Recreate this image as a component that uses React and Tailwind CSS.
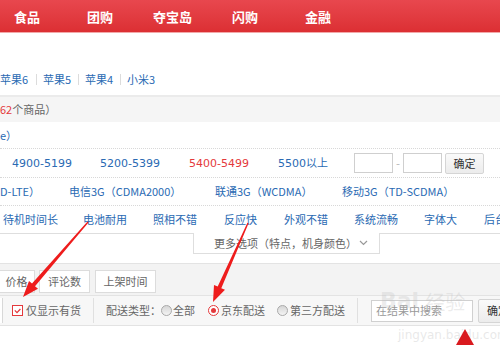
import React from "react";

var navItems = [
  { label: "食品", w: "w-[73px]" },
  { label: "团购", w: "w-[66px]" },
  { label: "夺宝岛", w: "w-[79px]" },
  { label: "闪购", w: "w-[73px]" },
  { label: "金融", w: "" },
];

var features = [
  { label: "待机时间长", w: "w-[80px]" },
  { label: "电池耐用", w: "w-[70px]" },
  { label: "照相不错", w: "w-[71px]" },
  { label: "反应快", w: "w-[60px]" },
  { label: "外观不错", w: "w-[70px]" },
  { label: "系统流畅", w: "w-[70px]" },
  { label: "字体大", w: "w-[60px]" },
  { label: "后台多开", w: "w-[70px]" },
];

var Radio = function (_a) {
  var checked = _a.checked, className = _a.className || "";
  if (checked) {
    return (<span className={"w-[11px] h-[11px] rounded-full border border-[#e4393c] bg-white flex items-center justify-center shrink-0 " + className}>
        <span className="w-[5px] h-[5px] rounded-full bg-[#e4393c]"></span>
      </span>);
  }
  return (<span className={"block w-[11px] h-[11px] rounded-full border border-[#a9a9a9] bg-linear-to-b from-[#d6d6d6] to-[#f4f4f4] shrink-0 " + className}></span>);
};

var App = function () {
  return (<div className="relative w-[500px] h-[345px] overflow-hidden bg-white font-['Noto_Sans_CJK_SC',sans-serif] text-[11px] leading-none">
      {/* top nav */}
      <div className="h-[33px] bg-linear-to-b from-[#e8474e] to-[#dc2f33] border-b border-[#f2a9a9] flex items-center text-[13px] font-bold text-white">
        <div className="w-[14px]"></div>
        {navItems.map(function (n) {
      return <span key={n.label} className={n.w}>{n.label}</span>;
    })}
      </div>

      {/* brands */}
      <div className="h-[62px] flex items-end pb-[10px] text-[#2a6ab3]">
        <span className="w-[36px]">苹果6</span>
        <span className="w-px h-[11px] bg-[#dcdcdc] mr-[6px]"></span>
        <span className="w-[35px]">苹果5</span>
        <span className="w-px h-[11px] bg-[#dcdcdc] mr-[6px]"></span>
        <span className="w-[35px]">苹果4</span>
        <span className="w-px h-[11px] bg-[#dcdcdc] mr-[6px]"></span>
        <span>小米3</span>
      </div>

      {/* result count */}
      <div className="h-[27px] border-t-2 border-[#ebebeb] bg-[#f5f5f5] flex items-center text-[#666]">
        <span className="text-[#e4393c]">62</span>
        <span>个商品）</span>
      </div>

      <div className="h-[27px] flex items-center border-b border-dotted border-[#d8d8d8] text-[#2a6ab3]">
        <span>e）</span>
      </div>

      {/* price row */}
      <div className="h-[29px] flex items-center border-b border-dotted border-[#d8d8d8] font-['DejaVu_Sans','Noto_Sans_CJK_SC',sans-serif] text-[#2a6ab3]">
        <div className="w-[12px]"></div>
        <span className="w-[88px]">4900-5199</span>
        <span className="w-[89px]">5200-5399</span>
        <span className="w-[89px] text-[#e4393c]">5400-5499</span>
        <span className="w-[76px]">5500以上</span>
        <span className="w-[39px] h-[20px] border border-[#cfcfcf] bg-white"></span>
        <span className="w-[10px] text-center text-[#bbb]">-</span>
        <span className="w-[39px] h-[20px] border border-[#cfcfcf] bg-white"></span>
        <span className="ml-[3px] w-[39px] h-[21px] border border-[#d5d5d5] rounded-[2px] bg-linear-to-b from-[#fafafa] to-[#ececec] flex items-center justify-center font-['Noto_Sans_CJK_SC',sans-serif] text-[#333]">确定</span>
      </div>

      {/* network row */}
      <div className="h-[28px] flex items-center border-b border-dotted border-[#d8d8d8] text-[#2a6ab3] whitespace-nowrap">
        <span className="w-[69px]">D-LTE）</span>
        <span className="w-[146px]">电信3G（CDMA2000）</span>
        <span className="w-[127px]">联通3G（WCDMA）</span>
        <span>移动3G（TD-SCDMA）</span>
      </div>

      {/* feature row */}
      <div className="h-[27px] flex items-center text-[#2a6ab3] whitespace-nowrap">
        <div className="w-[3px] shrink-0"></div>
        {features.map(function (f) {
      return <span key={f.label} className={f.w + " shrink-0"}>{f.label}</span>;
    })}
      </div>

      {/* more options tab */}
      <div className="h-[30px] flex items-start">
        <div className="w-[193px] border-t border-[#dedede]"></div>
        <div className="w-[187px] h-[21px] border-x border-b border-[#dedede] bg-white flex items-center pl-[20px] text-[#666]">
          <span>更多选项（特点，机身颜色）</span>
          <svg className="ml-[2px]" width="9" height="6" viewBox="0 0 9 6">
            <polyline points="1,1 4.5,4.5 8,1" fill="none" stroke="#999" strokeWidth="1.2"/>
          </svg>
        </div>
        <div className="flex-1 border-t border-[#dedede]"></div>
      </div>

      {/* sort bar */}
      <div className="h-[32px] border-t border-[#e3e3e3] bg-[#f3f3f3] flex items-start pt-[6px] text-[#666]">
        <span className="-ml-[8px] w-[43px] h-[23px] border border-[#dcdcdc] bg-white flex items-center justify-center pl-[6px]">价格</span>
        <span className="ml-[4px] w-[51px] h-[23px] border border-[#dcdcdc] bg-white flex items-center justify-center">评论数</span>
        <span className="ml-[5px] w-[61px] h-[23px] border border-[#dcdcdc] bg-white flex items-center justify-center">上架时间</span>
      </div>

      {/* filter row */}
      <div className="h-[31px] border-t border-b border-[#e3e3e3] bg-[#f7f7f7] flex items-center text-[#666] whitespace-nowrap">
        <span className="w-[3px] h-[25px] bg-white border-r border-[#d8d8d8] shrink-0"></span>
        <span className="ml-[9px] w-[11px] h-[11px] border border-[#e4393c] bg-white flex items-center justify-center shrink-0">
          <svg width="7" height="6" viewBox="0 0 7 6">
            <polyline points="0.8,2.4 3,4.6 6.4,1" fill="none" stroke="#e4393c" strokeWidth="1.3"/>
          </svg>
        </span>
        <span className="ml-[3px] shrink-0">仅显示有货</span>
        <span className="ml-[12px] w-px h-[25px] bg-[#e0e0e0] shrink-0"></span>
        <span className="ml-[12px] shrink-0">配送类型：</span>
        <Radio />
        <span className="ml-[1px] shrink-0">全部</span>
        <Radio checked className="ml-[13px]"/>
        <span className="ml-[2px] shrink-0">京东配送</span>
        <Radio className="ml-[12px]"/>
        <span className="ml-[2px] shrink-0">第三方配送</span>
        <span className="ml-[12px] w-px h-[25px] bg-[#e0e0e0] shrink-0"></span>
        <span className="ml-[13px] w-[102px] h-[22px] border border-[#d0d0d0] bg-white flex items-center pl-[4px] text-[#999] shrink-0">在结果中搜索</span>
        <span className="ml-[5px] w-[40px] h-[24px] border border-[#d5d5d5] rounded-[2px] bg-linear-to-b from-[#fafafa] to-[#ececec] flex items-center justify-center text-[#333] shrink-0">确定</span>
      </div>

      {/* watermark */}
      <div className="absolute left-[380px] top-[290px] flex items-end gap-[6px] text-[rgba(190,190,190,0.3)] pointer-events-none">
        <span className="text-[22px] font-bold font-['DejaVu_Sans',sans-serif]">Bai</span>
        <span className="text-[20px]">经验</span>
      </div>
      <div className="absolute left-[398px] top-[329px] text-[12px] text-[rgba(190,190,190,0.35)] font-['DejaVu_Sans',sans-serif] pointer-events-none">jingyan.baidu.com</div>

      {/* annotation arrows */}
      <svg className="absolute left-0 top-0 pointer-events-none" width="500" height="345" viewBox="0 0 500 345">
        <polygon points="87.5,221.5 88.5,222.5 35,286.2 38,288.8 23,297 29,281 32,283.6" fill="#ee1c1c"/>
        <polygon points="247.4,222.7 248.6,223.3 221.3,288.2 225,289.8 213,302 214,285 217.7,286.6" fill="#ee1c1c"/>
        <polygon points="465,329 456,345 474,345" fill="#d91a1f"/>
      </svg>
    </div>);
};

export default App;
